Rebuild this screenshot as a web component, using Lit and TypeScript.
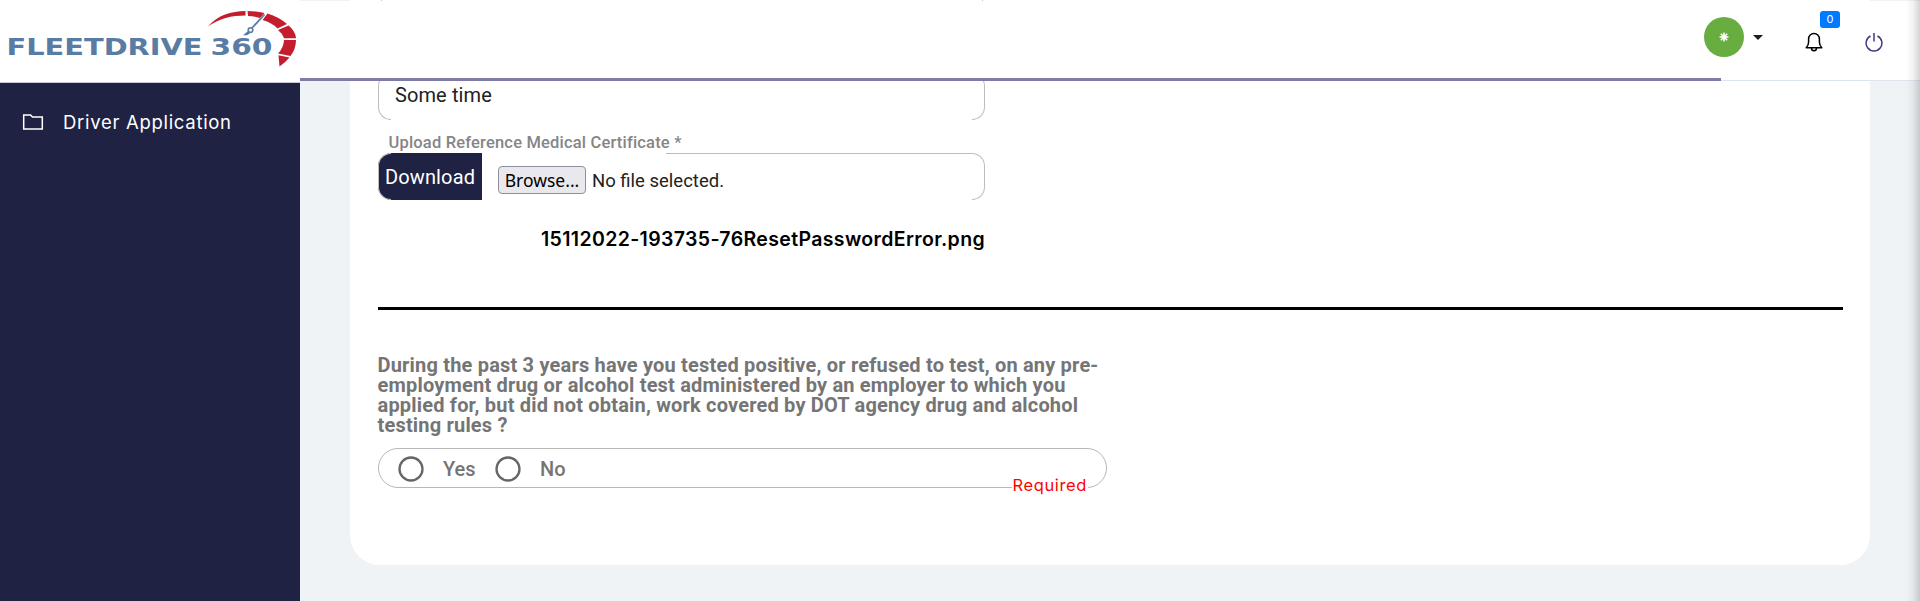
import { LitElement, html, css, svg } from "lit";
import { customElement } from "lit/decorators.js";

@customElement("fd-logo")
class FdLogo extends LitElement {
  static styles = css`
    :host { display: block; height: 82px; background: #fff; border-bottom: 1px solid #c9cacf; }
    svg { display: block; }
    .word { font: 700 23.5px "DejaVu Sans", sans-serif; fill: #587ca3; }
  `;
  render() {
    return html`<svg width="300" height="82" viewBox="0 0 300 82">
      <text class="word" x="6.500" y="55" textLength="196" lengthAdjust="spacingAndGlyphs">FLEETDRIVE</text>
      <text class="word" x="210.500" y="55" textLength="62" lengthAdjust="spacingAndGlyphs">360</text>
      <path fill="#c41e2e" d="M208 26.500C218 15 231 11.200 245.500 11V15.500C232 15.500 219 18.500 208 26.500Z"/>
      <path fill="#c41e2e" d="M247.500 11Q257 11 264.500 13L260 18Q254 16 248 16Z"/>
      <path fill="#c41e2e" d="M267.500 13.500Q279 17 287 24L277.500 28.500Q272 22.500 262.500 20Z"/>
      <path fill="#c41e2e" d="M288.500 25.500Q295.500 31 296 38.300H284Q282.500 33.500 278 30Z"/>
      <path fill="#c41e2e" d="M284 40H296Q296 49 290.500 56L278 53.500Q283.500 48 284 40Z"/>
      <path fill="#c41e2e" d="M278.500 55.200L289.500 57.500Q286 62 279.500 66.500Z"/>
      <path stroke="#587ca3" stroke-width="1.800" fill="none" d="M264.500 14.500L252 28"/>
      <circle cx="250.500" cy="30" r="2.300" fill="#fff" stroke="#587ca3" stroke-width="1.600"/>
      <path fill="#587ca3" d="M248 31L250.500 33L247 35.200H243Z"/>
    </svg>`;
  }
}

@customElement("fd-sidebar")
class FdSidebar extends LitElement {
  static styles = css`
    :host { display: block; background: #202243; }
    .item { display: flex; align-items: center; gap: 19px; padding: 25px 22px; height: 28px; color: #fff; }
    .label { font: 400 18.5px/28px Inter, sans-serif; letter-spacing: 0.7px; white-space: nowrap; }
  `;
  render() {
    return html`<fd-logo></fd-logo>
      <div class="item">
        <svg width="22" height="18" viewBox="0 0 22 18" fill="none" stroke="#fff" stroke-width="1.500">
          <path d="M1.700 15.900V1.900H8.500L10.500 4H20.300V15.900Z"/>
        </svg>
        <span class="label">Driver Application</span>
      </div>`;
  }
}

@customElement("fd-header")
class FdHeader extends LitElement {
  static styles = css`
    :host { display: block; height: 80px; background: #fff; }
    .bar { display: flex; align-items: center; justify-content: flex-end; height: 77px; padding-right: 37px; box-sizing: border-box; }
    .avatar { width: 40px; height: 40px; border-radius: 50%; background: #67ad3f; display: grid; place-items: center; margin: -5px 9px 0 0; }
    .caret { margin: -5px 42px 0 0; }
    .bell { position: relative; width: 18px; height: 20px; margin: 4px 42px 0 0; }
    .badge { position: absolute; left: 15px; top: -21px; width: 20px; height: 17px; border-radius: 3px; background: #007bff; color: #fff; font: 400 11px/17px Inter, sans-serif; text-align: center; }
    .power { margin: 4px 0 0; }
    svg { display: block; }
    .track { height: 3px; display: flex; align-items: flex-end; }
    .done { height: 3px; width: 1421px; background: linear-gradient(#827fa8, #7b79ab); }
    .rest { flex: 1; height: 1px; background: #dde6ef; }
  `;
  render() {
    const rays = [0, 45, 90, 135].map(
      (a) => svg`<path transform="rotate(${a} 5 5)" d="M5 0.500V9.500"/>`
    );
    return html`<div class="bar">
        <div class="avatar"><svg width="10" height="10" viewBox="0 0 10 10" stroke="#fff" stroke-width="1.500">${rays}<circle cx="5" cy="5" r="2.500" fill="#fff" stroke="none"/></svg></div>
        <svg class="caret" width="10" height="5" viewBox="0 0 10 5"><path d="M0 0H10L5 5Z" fill="#1b1c24"/></svg>
        <div class="bell">
          <svg width="18" height="20" viewBox="0 0 18 20" fill="none" stroke="#000" stroke-width="1.500">
            <path d="M1.200 15.700Q3.600 13.500 3.600 10V7A5.400 5.600 0 0 1 14.400 7V10Q14.400 13.500 16.800 15.700Z" stroke-linejoin="round"/>
            <path d="M6.500 16A2.500 2.800 0 0 0 11.500 16"/>
          </svg>
          <span class="badge">0</span>
        </div>
        <svg class="power" width="18" height="20" viewBox="0 0 18 20" fill="none" stroke="#3d3a80" stroke-width="1.500">
          <path d="M5.500 4A7.900 7.900 0 1 0 12.500 4M9 1V9.500"/>
        </svg>
      </div>
      <div class="track"><div class="done"></div><div class="rest"></div></div>`;
  }
}

@customElement("app-root")
class AppRoot extends LitElement {
  static styles = css`
    :host { display: grid; grid-template-columns: 300px 1fr; height: 601px; overflow: hidden; position: relative; background: #eff3f6; font-family: Roboto, sans-serif; }
    .main { position: relative; overflow: hidden; }
    fd-header { position: absolute; left: 0; right: 0; top: 1px; }
    .card { margin: 0 50px; height: 565px; box-sizing: border-box; padding: 0 28px; background: #fff; border-radius: 0 0 30px 30px; overflow: hidden; }
    .prev { width: 600px; height: 1px; margin: 0 0 72px 3px; border: solid #c4c4c4; border-width: 0 1px; }
    .field { position: relative; display: flex; width: 607px; height: 47px; }
    .outline { position: absolute; inset: 0; display: flex; pointer-events: none; }
    .start, .end { width: 13px; box-sizing: border-box; border: 1px solid #bdbdbd; }
    .start { border-right: 0; border-radius: 14px 0 0 14px; }
    .end { border-left: 0; border-radius: 0 14px 14px 0; }
    .notch { width: 275px; }
    .line { flex: 1; border-top: 1px solid #bdbdbd; }
    .value { padding: 10px 0 0 17px; font-size: 20px; letter-spacing: 0.1px; line-height: 24px; color: #212121; }
    .label { height: 33px; padding: 11px 0 0 10.5px; box-sizing: border-box; font-weight: 500; font-size: 16.5px; letter-spacing: 0.18px; line-height: 24px; color: #858585; }
    .download { width: 104px; height: 47px; border-radius: 14px 0 0 14px; background: #202243; color: #fff; font-size: 20px; letter-spacing: 0.15px; line-height: 48px; text-align: center; }
    .browse { margin: 13px 6px 0 16px; width: 88px; height: 28px; box-sizing: border-box; border: 1px solid #8f8f9d; border-radius: 4px; background: #e9e9ed; color: #000; font: 17.5px/27px "Noto Sans", sans-serif; text-align: center; }
    .none { margin-top: 15px; font-size: 18.5px; line-height: 26px; color: #212121; }
    .file { width: 607px; margin-top: 25px; text-align: right; font: 600 19.5px/28px Inter, sans-serif; letter-spacing: 0.36px; color: #000; white-space: nowrap; }
    .rule { height: 3px; margin: 54px -1px 0 0; background: #000; }
    .question { margin: 45px 0 0 -0.5px; width: 729px; font-weight: 700; font-size: 20px; letter-spacing: 0.185px; line-height: 20px; color: #757575; white-space: nowrap; }
    .choices { position: relative; display: flex; align-items: center; width: 729px; height: 40px; margin-top: 13px; box-sizing: border-box; border: 1px solid #b8b8b8; border-radius: 20px; padding: 1px 0 0 19px; font-weight: 500; font-size: 20px; line-height: 26px; color: #757575; }
    .choices > span { padding-top: 1px; }
    .radio { width: 26px; height: 26px; margin-right: 19px; }
    .radio circle { fill: none; stroke: #666; stroke-width: 2.3px; }
    .choices .yes { margin-right: 19.5px; }
    .choices .required { position: absolute; right: 18px; bottom: -10px; padding: 0 1px; background: #fff; color: #f00; font: 400 16.5px/24px Inter, sans-serif; letter-spacing: 0.62px; }
    .edge { position: absolute; right: 0; top: 0; bottom: 0; width: 14px; background: linear-gradient(to right, rgba(0,0,0,0), rgba(0,0,0,.05) 50%, rgba(0,0,0,.17)); }
  `;
  render() {
    const radio = () => html`<svg class="radio" viewBox="0 0 26 26"><circle cx="13" cy="13" r="11.500"/></svg>`;
    return html`<fd-sidebar></fd-sidebar>
      <div class="main">
        <div class="card">
          <div class="prev"></div>
          <div class="field">
            <div class="outline"><div class="start"></div><div class="line"></div><div class="end"></div></div>
            <span class="value">Some time</span>
          </div>
          <div class="label">Upload Reference Medical Certificate *</div>
          <div class="field">
            <div class="outline"><div class="start"></div><div class="notch"></div><div class="line"></div><div class="end"></div></div>
            <div class="download">Download</div>
            <div class="browse">Browse...</div>
            <span class="none">No file selected.</span>
          </div>
          <div class="file">15112022-193735-76ResetPasswordError.png</div>
          <div class="rule"></div>
          <div class="question">During the past 3 years have you tested positive, or refused to test, on any pre-<br>employment drug or alcohol test administered by an employer to which you<br>applied for, but did not obtain, work covered by DOT agency drug and alcohol<br>testing rules ?</div>
          <div class="choices">
            ${radio()}<span class="yes">Yes</span>
            ${radio()}<span>No</span>
            <span class="required">Required</span>
          </div>
        </div>
        <fd-header></fd-header>
        <div class="edge"></div>
      </div>`;
  }
}
